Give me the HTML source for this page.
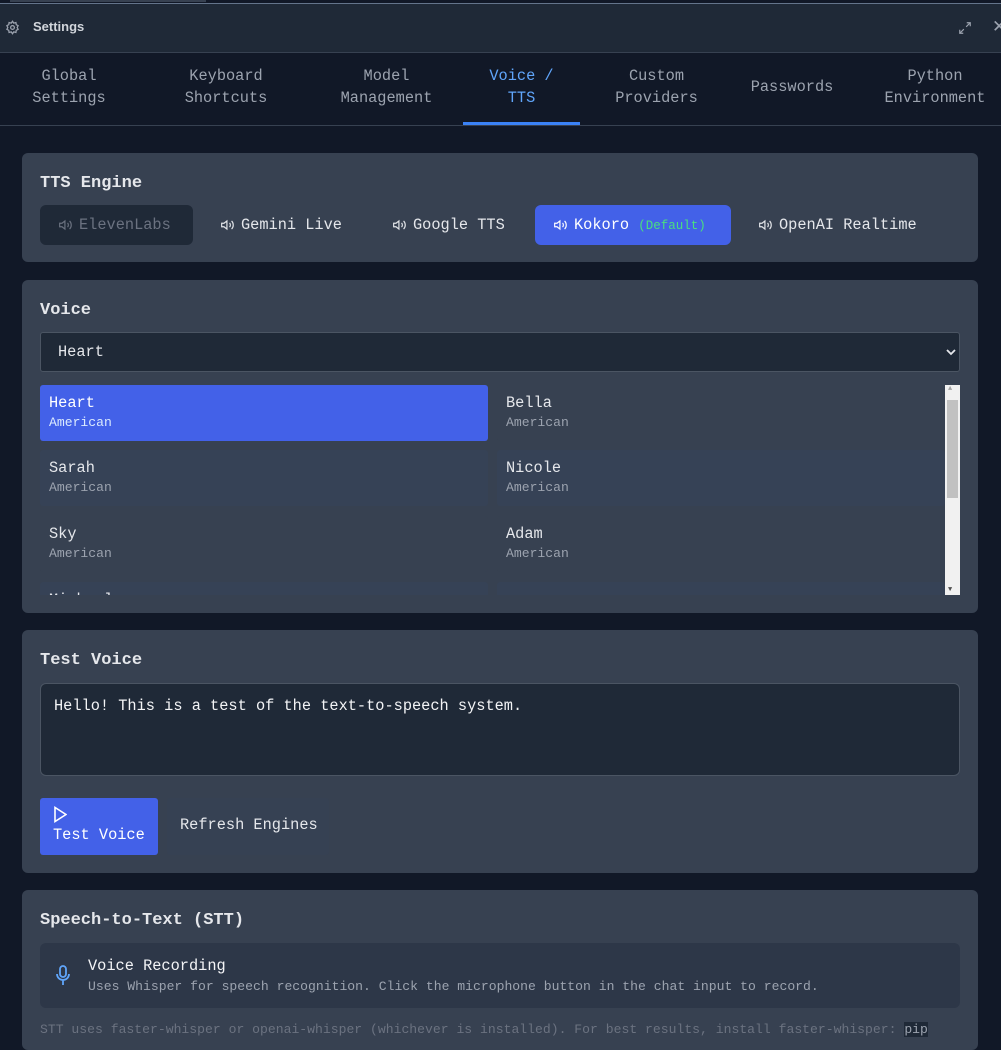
<!DOCTYPE html>
<html><head><meta charset="utf-8"><style>
*{box-sizing:border-box;margin:0;padding:0}
body{width:1001px;height:1032px;overflow:hidden;background:#111827;font-family:"Liberation Mono",monospace;color:#e5e7eb;position:relative}
.top{position:absolute;left:0;top:0;width:1001px;height:3px;background:#111827}
.top div{position:absolute;left:10px;top:0;width:196px;height:2px;background:#374151}
.hdr{position:absolute;top:3px;left:0;width:1001px;height:50px;background:#1f2937;border-top:1px solid #64748b;border-bottom:1px solid #374151}
.hdr .t{position:absolute;left:33px;top:15px;font-family:"Liberation Sans",sans-serif;font-weight:bold;font-size:13px;color:#d1d5db}
.tabs{position:absolute;top:53px;left:0;width:1001px;height:73px;border-bottom:1px solid #374151}
.tab{position:absolute;top:12px;text-align:center;font-size:15.3px;line-height:22px;color:#9ca3af}
.card{position:absolute;left:22px;width:956px;background:#374151;border-radius:6px}
.h{position:absolute;left:18px;font-weight:bold;font-size:17px;color:#e5e7eb}
.eng{position:absolute;top:52px;height:40px;border-radius:6px;font-size:15.3px;line-height:40px;color:#e5e7eb;padding-left:18px}
.eng svg{vertical-align:-3px;margin-right:6px}
.vc{position:absolute;width:448px;height:56px;border-radius:3px;padding:9px 0 0 9px}
.vc .n{font-size:15.3px;color:#e5e7eb;line-height:19px}
.vc .s{font-size:13.1px;color:#9ca3af;margin-top:2px}
</style></head><body>
<div class="top"><div></div></div>
<div class="hdr">
<svg style="position:absolute;left:5px;top:16px" width="15" height="15" viewBox="0 0 24 24" fill="none" stroke="#9ca3af" stroke-width="2"><circle cx="12" cy="12" r="3"/><path d="M12 2l2 3 3.5-1 .5 3.5 3 1.5-1.5 3 1.5 3-3 1.5-.5 3.5-3.5-1-2 3-2-3-3.5 1-.5-3.5-3-1.5 1.5-3-1.5-3 3-1.5.5-3.5 3.5 1z"/></svg>
<span class="t">Settings</span>
<svg style="position:absolute;left:958px;top:17px" width="14" height="14" viewBox="0 0 24 24" fill="none" stroke="#9ca3af" stroke-width="2"><path d="M15 3h6v6M9 21H3v-6M21 3l-7 7M3 21l7-7"/></svg>
<span style="position:absolute;left:992px;top:13px;color:#9ca3af;font-size:17px;font-family:'Liberation Sans',sans-serif">✕</span>
</div>
<div class="tabs">
<div class="tab" style="left:18px;width:102px">Global<br>Settings</div>
<div class="tab" style="left:170px;width:112px">Keyboard<br>Shortcuts</div>
<div class="tab" style="left:330px;width:113px">Model<br>Management</div>
<div class="tab" style="left:463px;width:117px;color:#60a5fa">Voice /<br>TTS</div>
<div style="position:absolute;left:463px;top:69px;width:117px;height:3px;background:#3b82f6"></div>
<div class="tab" style="left:600px;width:113px">Custom<br>Providers</div>
<div class="tab" style="left:742px;width:100px;top:23px">Passwords</div>
<div class="tab" style="left:875px;width:120px">Python<br>Environment</div>
</div>

<div class="card" style="top:153px;height:109px">
<div class="h" style="top:21px">TTS Engine</div>
<div class="eng" style="left:18px;width:153px;background:#1f2937;color:#6b7280"><svg width="15" height="14" viewBox="0 0 24 24" fill="none" stroke="currentColor" stroke-width="2"><path d="M11 5L6 9H2v6h4l5 4z M15.5 8.5a5 5 0 0 1 0 7M19 5a10 10 0 0 1 0 14"/></svg>ElevenLabs</div>
<div class="eng" style="left:180px;width:165px"><svg width="15" height="14" viewBox="0 0 24 24" fill="none" stroke="currentColor" stroke-width="2"><path d="M11 5L6 9H2v6h4l5 4z M15.5 8.5a5 5 0 0 1 0 7M19 5a10 10 0 0 1 0 14"/></svg>Gemini Live</div>
<div class="eng" style="left:352px;width:150px"><svg width="15" height="14" viewBox="0 0 24 24" fill="none" stroke="currentColor" stroke-width="2"><path d="M11 5L6 9H2v6h4l5 4z M15.5 8.5a5 5 0 0 1 0 7M19 5a10 10 0 0 1 0 14"/></svg>Google TTS</div>
<div class="eng" style="left:513px;width:196px;background:#4361e8;color:#fff"><svg width="15" height="14" viewBox="0 0 24 24" fill="none" stroke="currentColor" stroke-width="2"><path d="M11 5L6 9H2v6h4l5 4z M15.5 8.5a5 5 0 0 1 0 7M19 5a10 10 0 0 1 0 14"/></svg>Kokoro <span style="font-size:12.5px;color:#4ade80">(Default)</span></div>
<div class="eng" style="left:718px;width:185px"><svg width="15" height="14" viewBox="0 0 24 24" fill="none" stroke="currentColor" stroke-width="2"><path d="M11 5L6 9H2v6h4l5 4z M15.5 8.5a5 5 0 0 1 0 7M19 5a10 10 0 0 1 0 14"/></svg>OpenAI Realtime</div>
</div>

<div class="card" style="top:280px;height:333px">
<div class="h" style="top:21px">Voice</div>
<div style="position:absolute;left:18px;top:52px;width:920px;height:40px;background:#1f2937;border:1px solid #4b5563;border-radius:3px;font-size:15.3px;line-height:38px;padding-left:17px">Heart<svg style="position:absolute;right:3px;top:15px" width="10" height="8" viewBox="0 0 10 8" fill="none" stroke="#e5e7eb" stroke-width="1.8"><path d="M1 2l4 4 4-4"/></svg></div>
<div style="position:absolute;left:18px;top:105px;width:905px;height:210px;overflow:hidden">
<div class="vc" style="left:0;top:0;background:#4361e8"><div class="n" style="color:#fff">Heart</div><div class="s" style="color:#dbeafe">American</div></div>
<div class="vc" style="left:457px;top:0;background:#374151"><div class="n">Bella</div><div class="s">American</div></div>
<div class="vc" style="left:0;top:65px;background:#364256"><div class="n">Sarah</div><div class="s">American</div></div>
<div class="vc" style="left:457px;top:65px;background:#364256"><div class="n">Nicole</div><div class="s">American</div></div>
<div class="vc" style="left:0;top:131px;background:#374151"><div class="n">Sky</div><div class="s">American</div></div>
<div class="vc" style="left:457px;top:131px;background:#374151"><div class="n">Adam</div><div class="s">American</div></div>
<div class="vc" style="left:0;top:197px;background:#364256"><div class="n">Michael</div></div>
<div class="vc" style="left:457px;top:197px;background:#364256"></div>
</div>
<div style="position:absolute;left:923px;top:105px;width:15px;height:210px;background:#f1f1f1"><div style="position:absolute;left:2px;top:15px;width:11px;height:98px;background:#c1c1c1"></div><span style="position:absolute;left:3px;top:0;font-size:7px;color:#a3a3a3">▲</span><span style="position:absolute;left:3px;bottom:1px;font-size:7px;color:#505050">▼</span></div>
</div>

<div class="card" style="top:630px;height:243px">
<div class="h" style="top:21px">Test Voice</div>
<div style="position:absolute;left:18px;top:53px;width:920px;height:93px;background:#1f2937;border:1px solid #4b5563;border-radius:6px;font-size:15.3px;padding:13px 13px;color:#f3f4f6">Hello! This is a test of the text-to-speech system.</div>
<div style="position:absolute;left:18px;top:168px;width:118px;height:57px;background:#4361e8;border-radius:3px;color:#fff;font-size:15.3px;padding:8px 0 0 13px"><svg width="14" height="17" viewBox="0 0 14 17" fill="none" stroke="#fff" stroke-width="1.6"><path d="M2 1.5v14l11-7z"/></svg><div style="margin-top:-2px">Test Voice</div></div>
<div style="position:absolute;left:145px;top:168px;width:162px;height:57px;background:#364153;border-radius:3px;font-size:15.3px;line-height:55px;padding-left:13px">Refresh Engines</div>
</div>

<div class="card" style="top:890px;height:160px">
<div class="h" style="top:21px">Speech-to-Text (STT)</div>
<div style="position:absolute;left:18px;top:53px;width:920px;height:65px;background:#2d3748;border-radius:6px">
<svg style="position:absolute;left:15px;top:22px" width="16" height="21" viewBox="0 0 16 21" fill="none" stroke="#60a5fa" stroke-width="1.8"><rect x="5" y="1" width="6" height="11" rx="3"/><path d="M2 9a6 6 0 0 0 12 0M8 15v5"/></svg>
<div style="position:absolute;left:48px;top:14px;font-size:15.3px;color:#f3f4f6">Voice Recording</div>
<div style="position:absolute;left:48px;top:36px;font-size:13.1px;color:#9ca3af">Uses Whisper for speech recognition. Click the microphone button in the chat input to record.</div>
</div>
<div style="position:absolute;left:18px;top:132px;font-size:13.1px;color:#6b7280;white-space:nowrap">STT uses faster-whisper or openai-whisper (whichever is installed). For best results, install faster-whisper: <span style="background:#1f2937;color:#9ca3af">pip</span></div>
</div>
</body></html>
